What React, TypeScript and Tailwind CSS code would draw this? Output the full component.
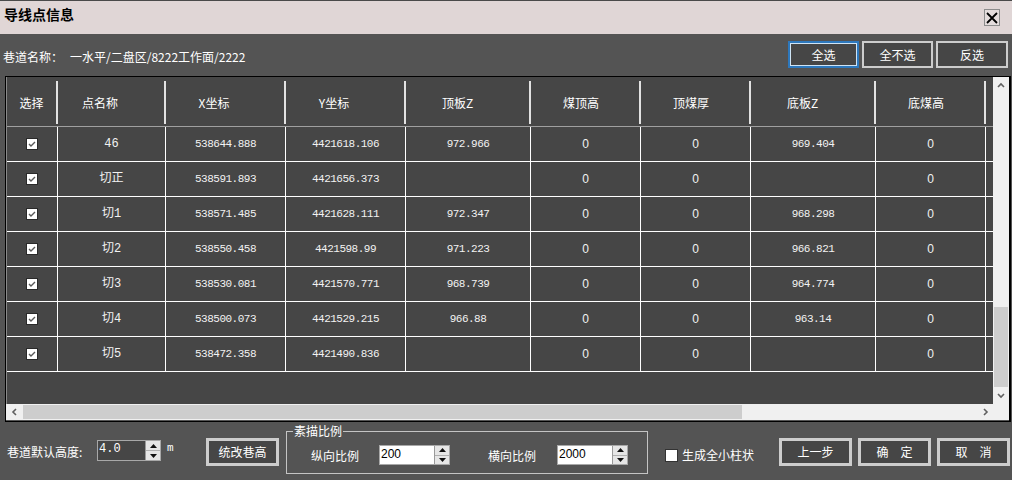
import React from "react";

const cjk = "font-['Noto_Sans_CJK_SC',sans-serif]";
const mono = "font-['Liberation_Mono','Noto_Sans_CJK_SC',monospace]";

const columns = [
  { title: "选择", w: "w-[51px]", hp: "" },
  { title: "点名称", w: "w-[108px]", hp: "pr-[22px]" },
  { title: "X坐标", w: "w-[120px]", hp: "pr-[22px]" },
  { title: "Y坐标", w: "w-[120px]", hp: "pr-[22px]" },
  { title: "顶板Z", w: "w-[125px]", hp: "pr-[20px]" },
  { title: "煤顶高", w: "w-[110px]", hp: "pr-[8px]" },
  { title: "顶煤厚", w: "w-[110px]", hp: "pr-[8px]" },
  { title: "底板Z", w: "w-[125px]", hp: "pr-[20px]" },
  { title: "底煤高", w: "w-[110px]", hp: "pr-[8px]" },
];

const rows = [
  ["46", "538644.888", "4421618.106", "972.966", "0", "0", "969.404", "0"],
  ["切正", "538591.893", "4421656.373", "", "0", "0", "", "0"],
  ["切1", "538571.485", "4421628.111", "972.347", "0", "0", "968.298", "0"],
  ["切2", "538550.458", "4421598.99", "971.223", "0", "0", "966.821", "0"],
  ["切3", "538530.081", "4421570.771", "968.739", "0", "0", "964.774", "0"],
  ["切4", "538500.073", "4421529.215", "966.88", "0", "0", "963.14", "0"],
  ["切5", "538472.358", "4421490.836", "", "0", "0", "", "0"],
];

function Chevron({ dir }: { dir: "up" | "down" | "left" | "right" }) {
  const d = {
    up: "M1 5 L4 2 L7 5",
    down: "M1 2 L4 5 L7 2",
    left: "M5 1 L2 4 L5 7",
    right: "M3 1 L6 4 L3 7",
  }[dir];
  return (
    <svg width="8" height="8" viewBox="0 0 8 8">
      <path d={d} fill="none" stroke="#606060" strokeWidth="1.6" />
    </svg>
  );
}

function CheckBox() {
  return (
    <div className="flex h-[12px] w-[12px] items-center justify-center border border-[#2a2a2a] bg-white">
      <svg width="10" height="10" viewBox="0 0 10 10">
        <path d="M2 5 L4 7 L8 3" fill="none" stroke="#5a5a5a" strokeWidth="1.4" />
      </svg>
    </div>
  );
}

function Spinner() {
  return (
    <div className="flex w-[15px] shrink-0 flex-col border-l border-[#9a9a9a] bg-[#e6e6e6]">
      <div className="flex flex-1 items-center justify-center border-b border-[#b0b0b0]">
        <svg width="7" height="4" viewBox="0 0 7 4">
          <path d="M0 4 L3.5 0 L7 4 Z" fill="#111" />
        </svg>
      </div>
      <div className="flex flex-1 items-center justify-center">
        <svg width="7" height="4" viewBox="0 0 7 4">
          <path d="M0 0 L3.5 4 L7 0 Z" fill="#111" />
        </svg>
      </div>
    </div>
  );
}

function DlgButton({ label, className }: { label: string; className: string }) {
  return (
    <div
      className={`flex shrink-0 items-center justify-center border-[3px] border-[#cdcdcd] bg-[#464646] text-[12px] leading-[16px] text-white ${className}`}
    >
      {label}
    </div>
  );
}

export default function App() {
  return (
    <div className={`flex h-[480px] w-[1012px] flex-col overflow-hidden bg-[#545454] ${cjk}`}>
      {/* Title bar */}
      <div className="flex h-[34px] shrink-0 items-start border-t border-[#4a4a4a] bg-[#e0d6d6]">
        <div className="ml-[4px] mt-[4px] text-[14px] font-bold leading-[18px] text-black">导线点信息</div>
        <div className="ml-auto mr-[12px] mt-[8px] flex h-[17px] w-[16px] items-center justify-center border border-[#8c8c8c] bg-[#e4dcdc]">
          <svg width="12" height="12" viewBox="0 0 12 12">
            <path d="M1 1 L11 11 M11 1 L1 11" stroke="#000" strokeWidth="1.8" />
          </svg>
        </div>
      </div>

      {/* Path row */}
      <div className="flex h-[42px] shrink-0 items-start">
        <div className="ml-[3px] mt-[15px] w-[67px] text-[12px] leading-[16px] text-white">巷道名称：</div>
        <div className="mt-[15px] text-[12px] leading-[16px] text-white">一水平/二盘区/8222工作面/2222</div>
        <div className="ml-auto mr-[4px] mt-[7px] flex gap-[3px]">
          <div className="flex h-[27px] w-[71px] items-center justify-center border-2 border-[#2d78bd] bg-[#464646] text-[12px] leading-[16px] text-white shadow-[inset_0_0_0_1px_#cfe4f5]">
            全选
          </div>
          <div className="flex h-[27px] w-[71px] items-center justify-center border-2 border-[#cdcdcd] bg-[#464646] text-[12px] leading-[16px] text-white">
            全不选
          </div>
          <div className="flex h-[27px] w-[72px] items-center justify-center border-2 border-[#cdcdcd] bg-[#464646] text-[12px] leading-[16px] text-white">
            反选
          </div>
        </div>
      </div>

      {/* Grid */}
      <div className="mx-[5px] flex h-[346px] w-[1006px] shrink-0 flex-col border-b border-l border-r-2 border-t border-black">
        <div className="flex h-[327px]">
          <div className="flex w-[987px] flex-col border-l border-[#8a8a8a] bg-[#464646]">
            <div className="flex h-[50px] shrink-0 border-b border-[#a0a0a0] pt-[2px]">
              {columns.map((c) => (
                <div key={c.title} className={`flex h-full shrink-0 ${c.w}`}>
                  <div
                    className={`flex flex-1 items-center justify-center text-[12px] leading-[16px] text-white ${c.hp}`}
                  >
                    {c.title}
                  </div>
                  <div className="my-[2px] w-[2px] bg-[#e2e2e2]" />
                </div>
              ))}
              <div className="flex-1" />
            </div>
            {rows.map((r, i) => (
              <div key={i} className="flex h-[35px] shrink-0 border-b border-white">
                <div className="flex w-[51px] shrink-0 items-center justify-center border-r border-white">
                  <CheckBox />
                </div>
                {r.map((v, j) => (
                  <div
                    key={j}
                    className={`flex shrink-0 items-center justify-center border-r border-white text-[#f2f2f2] ${columns[j + 1].w} ${
                      j === 0
                        ? `${mono} text-[12px] leading-[16px]`
                        : v === "0"
                          ? "font-['Liberation_Sans',sans-serif] text-[12px] leading-[14px]"
                          : `${mono} text-[11px] leading-[14px] tracking-[-0.5px]`
                    }`}
                  >
                    {v}
                  </div>
                ))}
                <div className="flex-1" />
              </div>
            ))}
            <div className="flex-1" />
          </div>
          {/* vertical scrollbar */}
          <div className="flex w-[16px] flex-col bg-[#f0f0f0]">
            <div className="flex h-[17px] items-center justify-center">
              <Chevron dir="up" />
            </div>
            <div className="h-[213px]" />
            <div className="mx-[1px] h-[80px] bg-[#cdcdcd]" />
            <div className="flex flex-1 items-center justify-center">
              <Chevron dir="down" />
            </div>
          </div>
        </div>
        {/* horizontal scrollbar */}
        <div className="flex h-[16px]">
          <div className="flex w-[987px] items-stretch bg-[#f0f0f0]">
            <div className="flex w-[17px] items-center justify-center">
              <Chevron dir="left" />
            </div>
            <div className="my-[1px] w-[719px] bg-[#cdcdcd]" />
            <div className="flex-1" />
            <div className="flex w-[17px] items-center justify-center">
              <Chevron dir="right" />
            </div>
          </div>
          <div className="w-[16px] bg-[#f0f0f0]" />
        </div>
      </div>

      {/* Bottom controls */}
      <div className="flex h-[58px] shrink-0 items-start">
        <div className="ml-[7px] mt-[22px] w-[90px] shrink-0 text-[12px] leading-[16px] text-white">巷道默认高度:</div>
        <div className="mt-[18px] flex h-[21px] w-[64px] shrink-0 border border-[#a8a8a8] bg-[#464646]">
          <div className={`flex-1 pl-[1px] pt-[1px] text-[12px] leading-[14px] text-white ${mono}`}>4.0</div>
          <Spinner />
        </div>
        <div className={`ml-[6px] mt-[19px] w-[8px] shrink-0 text-[11px] leading-[14px] text-white ${mono}`}>m</div>
        <DlgButton label="统改巷高" className="ml-[31px] mt-[16px] h-[28px] w-[73px]" />
        <fieldset className="ml-[7px] mt-[1px] h-[51px] w-[362px] shrink-0 border border-[#c4c4c4] px-0">
          <legend className="ml-[6px] px-[1px] text-[12px] leading-[16px] text-white">素描比例</legend>
          <div className="flex items-start">
            <div className="ml-[24px] mt-[9px] w-[68px] shrink-0 text-[12px] leading-[16px] text-white">纵向比例</div>
            <div className="mt-[6px] flex h-[20px] w-[71px] shrink-0 border border-[#a8a8a8] bg-white">
              <div className="flex-1 pl-[1px] text-[12px] leading-[16px] text-black font-['Liberation_Sans',sans-serif]">200</div>
              <Spinner />
            </div>
            <div className="ml-[38px] mt-[9px] w-[69px] shrink-0 text-[12px] leading-[16px] text-white">横向比例</div>
            <div className="mt-[6px] flex h-[20px] w-[71px] shrink-0 border border-[#a8a8a8] bg-white">
              <div className="flex-1 pl-[1px] text-[12px] leading-[16px] text-black font-['Liberation_Sans',sans-serif]">2000</div>
              <Spinner />
            </div>
          </div>
        </fieldset>
        <div className="ml-[17px] mt-[27px] h-[13px] w-[13px] shrink-0 border border-[#333] bg-white" />
        <div className="ml-[4px] mt-[25px] w-[72px] shrink-0 text-[12px] leading-[16px] text-white">生成全小柱状</div>
        <DlgButton label="上一步" className="ml-[25px] mt-[16px] h-[28px] w-[73px]" />
        <DlgButton label="确　定" className="ml-[6px] mt-[16px] h-[28px] w-[73px]" />
        <DlgButton label="取　消" className="ml-[6px] mt-[16px] h-[28px] w-[73px]" />
      </div>
    </div>
  );
}
